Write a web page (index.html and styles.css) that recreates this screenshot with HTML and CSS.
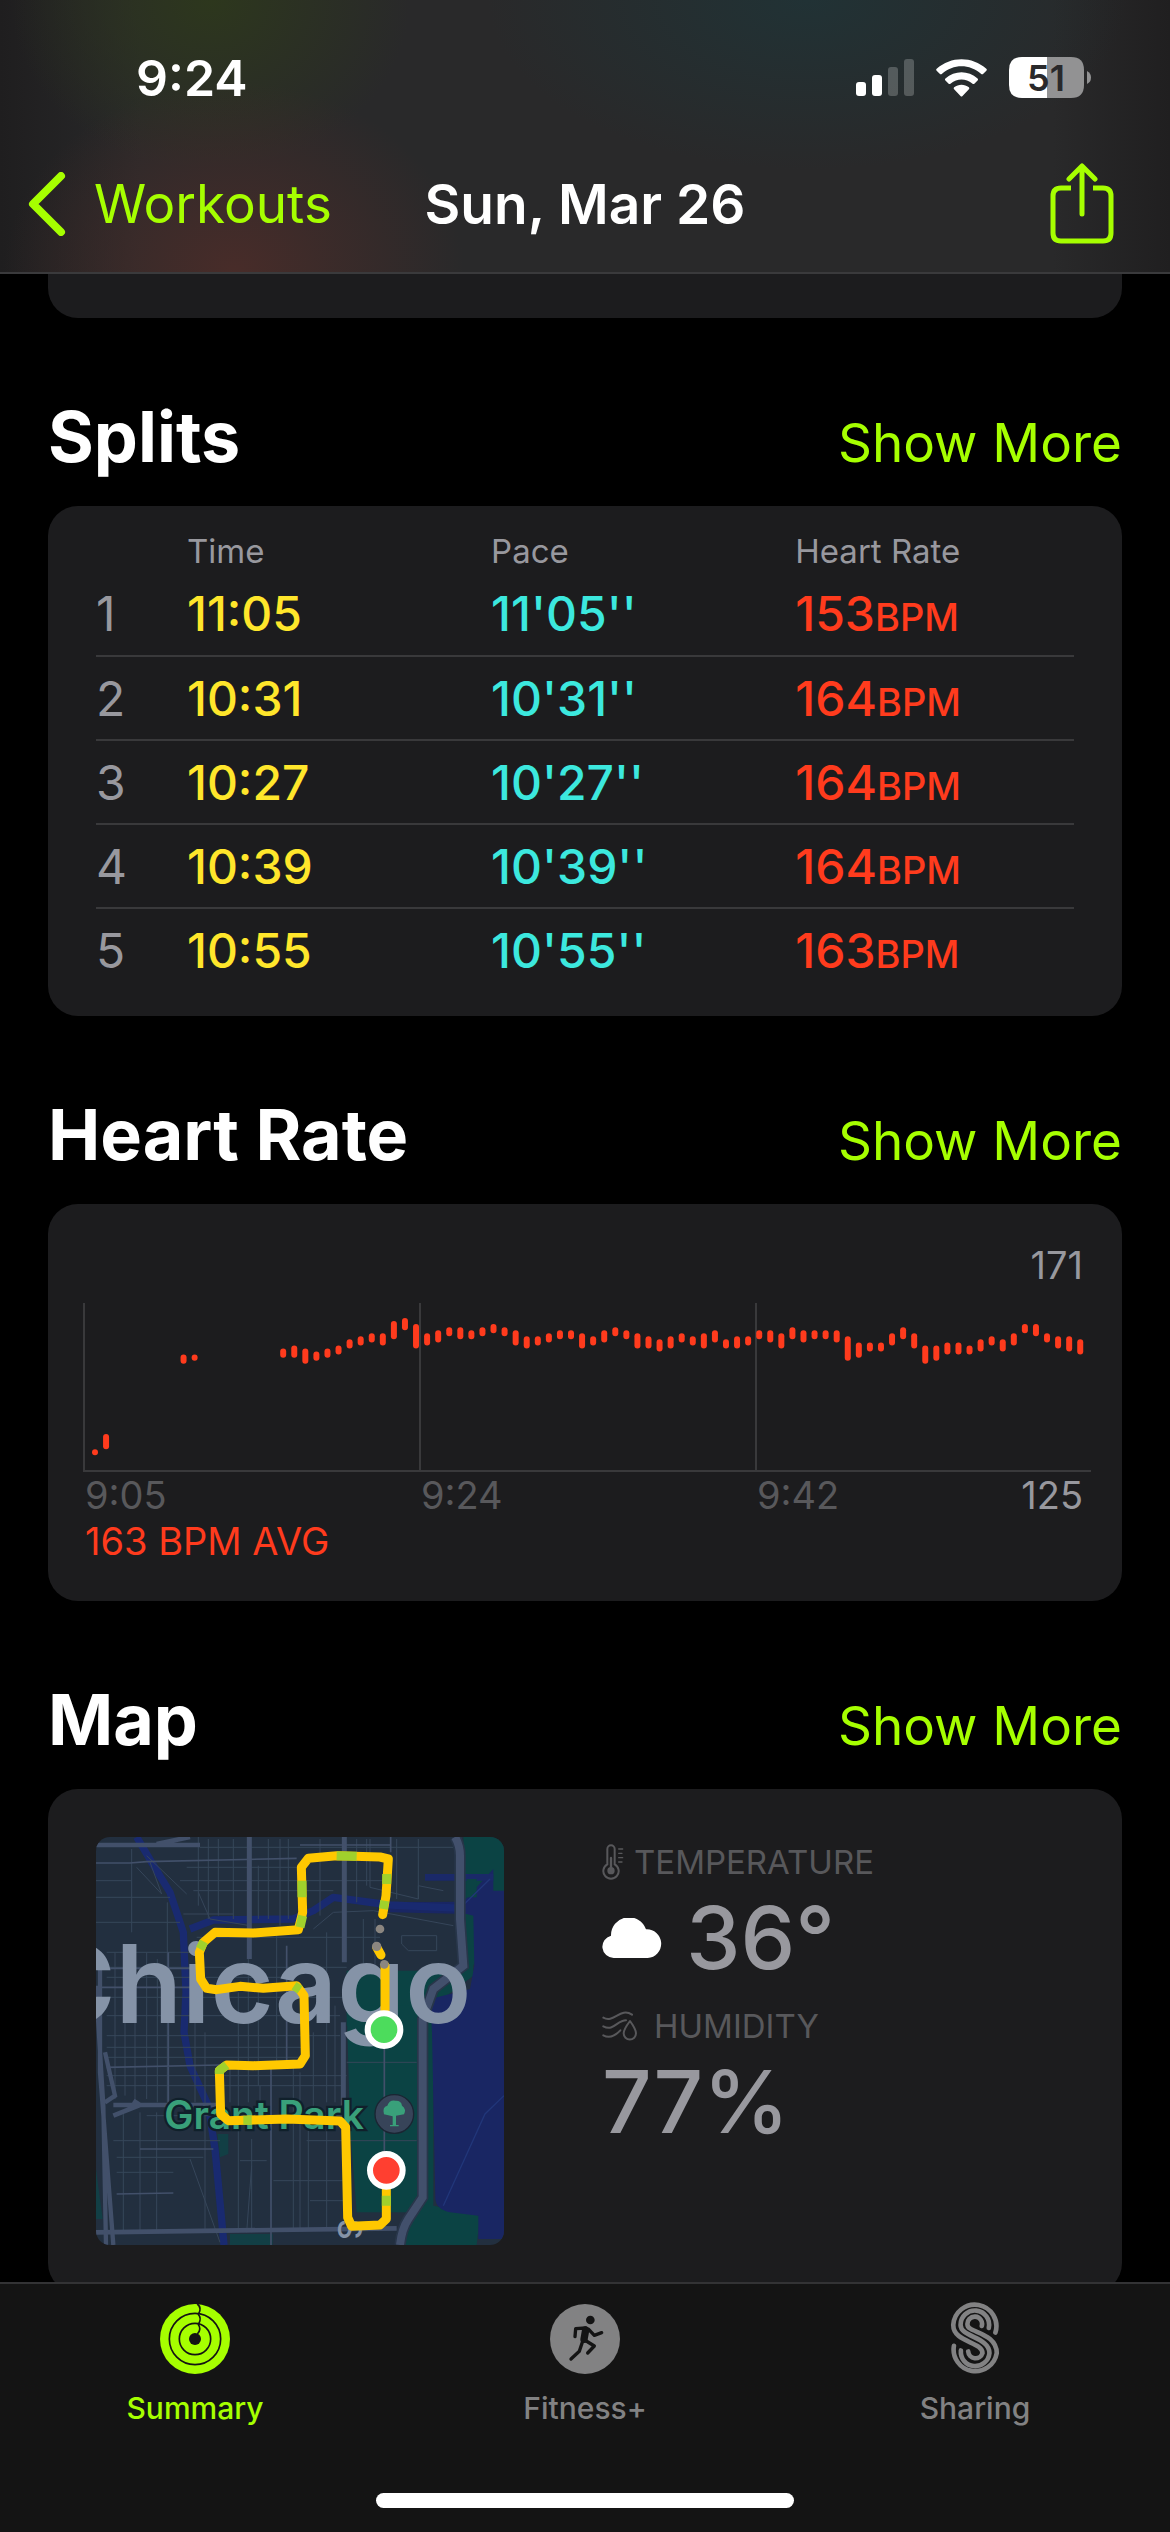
FILE: index.html
```
<!DOCTYPE html>
<html lang="en">
<head>
    <meta charset="UTF-8">
    <meta name="viewport" content="width=device-width, initial-scale=1.0">
    <title>Workout - Sun, Mar 26</title>
    <link rel="stylesheet" href="styles.css">
</head>
<body>
    <header class="top-bar">
        <div class="status-bar">
            <span class="clock">9:24</span>
            <div class="status-icons">
                <svg width="58" height="38" viewBox="0 0 58 38" fill="#fff">
                    <rect x="0" y="23" width="10" height="14" rx="3"/>
                    <rect x="16" y="16" width="10" height="21" rx="3"/>
                    <rect x="32" y="8" width="10" height="29" rx="3" opacity=".22"/>
                    <rect x="48" y="0" width="10" height="37" rx="3" opacity=".22"/>
                </svg>
                <svg width="51" height="38" viewBox="0 0 152 113" fill="#fff">
                    <path d="M2 29C44-9 108-9 150 29Q153 32 150 35L141 44Q138 47 134 44C101 14 51 14 18 44Q14 47 11 44L2 35Q-1 32 2 29Z"/>
                    <path d="M28 58C56 33 96 33 124 58Q127 61 124 64L115 73Q112 76 108 73C89 57 63 57 44 73Q40 76 37 73L28 64Q25 61 28 58Z"/>
                    <path d="M54 84C67 74 85 74 98 84Q101 87 98 90L79 110Q76 113 73 110L54 90Q51 87 54 84Z"/>
                </svg>
                <svg class="battery" width="83" height="41" viewBox="0 0 83 41">
                    <path d="M13 0H38V41H13Q0 41 0 28V13Q0 0 13 0Z" fill="#fff"/>
                    <path d="M38 0H62Q75 0 75 13V28Q75 41 62 41H38Z" fill="#929293"/>
                    <path d="M78 14Q82 16 82 20.500T78 27Z" fill="#929293"/>
                    <text x="37" y="34" text-anchor="middle">51</text>
                </svg>
            </div>
        </div>
        <nav class="nav-bar">
            <a href="#" class="back">
                <svg width="38" height="64" viewBox="0 0 38 64" fill="none" stroke="currentColor" stroke-width="8" stroke-linecap="round" stroke-linejoin="round">
                    <path d="M33 4L5 32L33 60"/>
                </svg>
                Workouts
            </a>
            <h1>Sun, Mar 26</h1>
            <button class="share" aria-label="Share">
                <svg width="64" height="82" viewBox="0 0 64 82" fill="none" stroke="currentColor" stroke-width="5" stroke-linecap="round" stroke-linejoin="round">
                    <path d="M21 25H11Q3 25 3 33V70Q3 78 11 78H53Q61 78 61 70V33Q61 25 53 25H43" stroke-linecap="butt"/>
                    <path d="M32 51V4M19 16L32 3L45 16"/>
                </svg>
            </button>
        </nav>
    </header>

    <main class="content">
        <div class="card card-end"></div>

        <section>
            <div class="section-head">
                <h2>Splits</h2>
                <a href="#">Show More</a>
            </div>
            <div class="card splits">
                <table>
                    <thead>
                        <tr><th class="col-num"></th><th class="col">Time</th><th class="col">Pace</th><th>Heart Rate</th></tr>
                    </thead>
                    <tbody>
                        <tr><td>1</td><td class="time">11:05</td><td class="pace">11'05''</td><td class="bpm">153<small>BPM</small></td></tr>
                        <tr><td>2</td><td class="time">10:31</td><td class="pace">10'31''</td><td class="bpm">164<small>BPM</small></td></tr>
                        <tr><td>3</td><td class="time">10:27</td><td class="pace">10'27''</td><td class="bpm">164<small>BPM</small></td></tr>
                        <tr><td>4</td><td class="time">10:39</td><td class="pace">10'39''</td><td class="bpm">164<small>BPM</small></td></tr>
                        <tr><td>5</td><td class="time">10:55</td><td class="pace">10'55''</td><td class="bpm">163<small>BPM</small></td></tr>
                    </tbody>
                </table>
            </div>
        </section>

        <section>
            <div class="section-head">
                <h2>Heart Rate</h2>
                <a href="#">Show More</a>
            </div>
            <div class="card heart">
                <div class="chart-max">171</div>
                <svg id="hr-chart" viewBox="0 0 1008 169">
                    <path d="M1 0V168M337 0V168M673 0V168" stroke="#39393b" stroke-width="2"/>
                    <path d="M0 168H1008" stroke="#39393b" stroke-width="2"/>
                </svg>
                <div class="chart-axis">
                    <div>9:05</div>
                    <div>9:24</div>
                    <div class="axis-end">9:42 <span class="chart-min">125</span></div>
                </div>
                <div class="chart-avg">163 BPM AVG</div>
            </div>
        </section>

        <section>
            <div class="section-head">
                <h2>Map</h2>
                <a href="#">Show More</a>
            </div>
            <div class="card map-card">
                <svg class="map" viewBox="48 54 1224 1224">
                    <rect x="48" y="54" width="1224" height="1224" fill="#222f3f"/>
                    <!-- lake and parks -->
                    <path d="M1150 54H1272V230L1180 440L1180 470L1060 560L1060 1160L1200 1190L1190 1278H960L1030 1130V620H800V455H1160Z" fill="#0b4344"/>
                    <path d="M800 560H1020V1180H830L810 920Z" fill="#0b4344"/>
                    <path d="M930 250L1150 248L1240 150V215H1272V1260H1195L1195 1190L1110 1180Q1068 1170 1066 1140L1056 640L1050 540L1170 510L1183 440L1180 290L1160 285L930 280Z" fill="#192663"/>
                    <path d="M1035 165H1240V185H1035Z" fill="#1a2968"/>
                    <rect x="1160" y="180" width="30" height="55" fill="#0b4344"/>
                    <path d="M412 945H445V1005L420 1015Z M450 1245H578V1278H450Z M48 1050L68 1200H48Z" fill="#123f45"/>
                    <!-- river -->
                    <g fill="none" stroke="#192a70" stroke-width="22" stroke-linejoin="round">
                        <path d="M170 54L215 130L270 220L310 340L318 520L312 640L330 740L385 860L405 990L432 1278"/>
                        <path d="M330 330L400 303L640 300L700 275L760 235L930 258L1150 268"/>
                    </g>
                    <path d="M1272 830L1215 885L1090 1160M1140 268L1230 180" fill="none" stroke="#213679" stroke-width="4"/>
                    <!-- small streets -->
                    <g fill="none" stroke="#36465a" stroke-width="3">
                        <path d="M360 85H1120M320 145H650M300 185H930M340 215H760M310 285H460M350 355H900M48 235H270M48 310H300M80 400H340M80 445H800M80 475H620M80 535H800M80 590H780M80 650H780M80 685H680M80 715H660M80 770H800M80 800H790M200 890H800M110 1015H370M480 1025H560M680 965H1010M580 1085H800M690 1145H800M110 1060H280M100 965H420M800 730H1010"/>
                        <path d="M105 400V840M135 400V830M165 400V850M200 400V840M232 420V850M262 250V850M385 60V300M415 60V290M355 54V260M460 60V300M535 140V300M565 60V300M600 60V320M625 60V300M345 500V850M375 640V1240M450 740V850M475 520V1240M505 380V850M535 500V800M590 330V740M640 740V1230M660 760V1230M700 640V900M740 340V850M765 560V850M685 900V1230M740 900V1230M720 60V290M830 60V250M860 60V200M885 300V440M950 60V240M1015 60V240M850 300V450M130 880V1240M180 880V1240M230 880V1240M515 960V1240M540 800V900"/>
                        <path d="M170 145L245 225L210 130M200 110L320 225M155 90V340M48 185H155M700 330L760 280L880 275L1120 320M965 350H1070V395H985L965 375ZM870 60V205L1015 240V200L1090 215M355 220L390 300L510 320M330 1020L420 1270M515 1040L500 1240"/>
                    </g>
                    <!-- main streets -->
                    <g fill="none" stroke="#42506a" stroke-width="9">
                        <path d="M48 132H150L200 128L650 118M80 745L420 738M180 990H400M110 1125L280 1122M80 448H340M620 380V740M265 400V870M573 740V1278M932 54V100M660 78H932M913 660V1000M48 505H340" stroke-width="5"/>
                        <path d="M508 54V420M793 54V430M790 610V900" stroke-width="15"/>
                        <path d="M48 78L360 78M230 75L330 54M100 858H420M160 845L180 858L100 890" stroke-width="14"/>
                        <path d="M48 1240L950 1228" stroke-width="14"/>
                        <path d="M60 440V760L68 860L100 1278M48 500L70 860L78 1278M75 700L105 830L75 850" stroke-width="13"/>
                    </g>
                    <path d="M1125 54Q1140 80 1140 110V300L1150 440L1060 510L1028 600V1135L985 1200Q965 1230 960 1278" fill="none" stroke="#28364a" stroke-width="34"/>
                    <path d="M1125 54Q1140 80 1140 110V300L1150 440L1060 510L1028 600V1135L985 1200Q965 1230 960 1278" fill="none" stroke="#42506c" stroke-width="24"/>
                    <text class="map-city" x="1174" y="613" text-anchor="end">Chicago</text>
                    <text class="map-park" x="253" y="930">Grant Park</text>
                    <text class="map-street" transform="translate(774 1200) rotate(90)">S</text>
                    <circle cx="943" cy="885" r="58" fill="#374459" stroke="#1b2533" stroke-width="4"/>
                    <path d="M938 918V892L912 886Q906 864 922 860Q928 842 946 845Q964 844 966 860Q980 870 972 886L948 890V918H956V922H930V918Z" fill="#39a07a"/>
                    <!-- route -->
                    <g fill="none" stroke="#ffc800" stroke-width="27" stroke-linecap="round" stroke-linejoin="round">
                        <path d="M908 287L918 230L925 120L900 114L770 110L685 118L664 145L668 280L655 332L520 342L405 340L370 370L358 400L362 480L380 508L410 512L480 502L550 508L650 500L672 530L676 710L660 735L520 740L440 738L418 755L422 885L445 905L620 900L780 906L797 925L803 1195L815 1222L900 1218L919 1200V1110"/>
                        <path d="M890 385L903 408M915 440V580"/>
                        <path d="M770 110L830 112M666 185V235M668 290L660 325M372 368L360 390M642 500L660 512M440 738L418 755V765M920 165V195M914 245L910 270M490 904H515M919 1130V1160" stroke="#a0d02c" stroke-linecap="butt"/>
                    </g>
                    <g fill="#8b8680">
                        <circle cx="900" cy="330" r="13"/>
                        <circle cx="890" cy="382" r="14"/>
                        <circle cx="913" cy="436" r="13"/>
                    </g>
                    <circle cx="912" cy="632" r="49" fill="#4cdc5c" stroke="#fff" stroke-width="18"/>
                    <circle cx="919" cy="1054" r="49" fill="#ff3f30" stroke="#fff" stroke-width="18"/>
                </svg>
                <div class="weather">
                    <div class="label">
                        <svg width="22" height="36" viewBox="0 0 66 108" fill="none" stroke="currentColor" stroke-width="6" stroke-linecap="round">
                            <path d="M16 15A10 10 0 0 1 38 15V61A23 23 0 1 1 16 61Z"/>
                            <path d="M27 42V75" stroke-width="7"/>
                            <circle cx="27" cy="80" r="8" fill="currentColor"/>
                            <path d="M50 15H62M50 28H60M50 41H62M50 54H60" stroke-width="4"/>
                        </svg>
                        TEMPERATURE
                    </div>
                    <div class="value">
                        <svg width="60" height="40" viewBox="0 0 180 120" fill="#fff">
                            <path d="M35 120A34 34 0 0 1 27 53A54 54 0 0 1 132 34A43 43 0 1 1 137 120Z"/>
                        </svg>
                        36°
                    </div>
                    <div class="label humidity">
                        <svg width="36" height="30" viewBox="0 0 108 90" fill="none" stroke="currentColor" stroke-width="6" stroke-linecap="round" stroke-linejoin="round">
                            <path d="M4 20C35 38 55-12 90 11M4 46C35 62 45 28 72 28M4 73C25 84 42 72 55 58"/>
                            <path d="M84 30Q65 55 65 67A18 18 0 0 0 102 67Q102 55 84 30Z"/>
                        </svg>
                        HUMIDITY
                    </div>
                    <div class="value">77%</div>
                </div>
            </div>
        </section>
    </main>

    <footer class="tab-bar">
        <nav class="tabs">
            <a href="#" class="tab active">
                <svg width="70" height="78" viewBox="0 0 210 210">
                    <circle cx="105" cy="105" r="105" fill="currentColor"/>
                    <circle cx="105" cy="105" r="18" fill="#141414"/>
                    <g fill="none" stroke="#141414" stroke-width="5">
                        <circle cx="105" cy="105" r="77"/>
                        <circle cx="105" cy="105" r="47"/>
                        <path d="M112 0Q126 12 116 29M114 30Q126 42 116 60M114 60Q126 76 112 90"/>
                    </g>
                </svg>
                Summary
            </a>
            <a href="#" class="tab">
                <svg width="70" height="78" viewBox="0 0 210 210">
                    <circle cx="105" cy="105" r="105" fill="currentColor"/>
                    <circle cx="121" cy="48" r="13" fill="#141414"/>
                    <g fill="none" stroke="#141414" stroke-width="10" stroke-linecap="round" stroke-linejoin="round">
                        <path d="M108 72L77 74L75 98M116 76L133 94L155 86M98 112L88 142L63 165M104 108L133 126L113 147"/>
                        <path d="M107 78L102 106" stroke-width="22"/>
                    </g>
                </svg>
                Fitness+
            </a>
            <a href="#" class="tab">
                <svg width="50" height="78" viewBox="-1 0 149 235" fill="none" stroke="currentColor" stroke-width="14" stroke-linecap="round">
                    <path d="M135 98A65 65 0 1 0 8 75C8 128 96 125 96 160A22 22 0 0 1 53 155"/>
                    <path d="M115 84A43 43 0 1 0 30 75C30 112 117 112 117 160A43 43 0 0 1 31 152"/>
                    <path d="M94 78A22 22 0 1 0 51 75C51 98 139 98 139 160A65 65 0 0 1 10 138"/>
                </svg>
                Sharing
            </a>
        </nav>
        <div class="home-indicator"></div>
    </footer>

    <script>
        // [slot, top, length] of each heart rate bar
        const bars = [
            [0, 43, 2], [1, 38, 5], [8, 12, 3], [9, 12, 2],
            [17, 10, 3], [18, 9, 4], [19, 10, 5], [20, 11, 3], [21, 10, 3], [22, 9, 3],
            [23, 7, 3], [24, 6, 3], [25, 5, 3], [26, 5, 4], [27, 1, 6], [28, 0, 4],
            [29, 2, 8], [30, 5, 4], [31, 4, 4], [32, 3, 3], [33, 3, 4], [34, 4, 3],
            [35, 3, 3], [36, 2, 3], [37, 3, 3], [38, 4, 5], [39, 6, 4], [40, 6, 3],
            [41, 5, 3], [42, 4, 3], [43, 4, 3], [44, 5, 5], [45, 6, 3], [46, 4, 4],
            [47, 3, 3], [48, 4, 3], [49, 5, 5], [50, 6, 4], [51, 7, 4], [52, 6, 4],
            [53, 5, 3], [54, 6, 3], [55, 5, 5], [56, 4, 4], [57, 7, 3], [58, 6, 4],
            [59, 6, 3], [60, 4, 3], [61, 4, 4], [62, 5, 5], [63, 3, 4], [64, 4, 4],
            [65, 4, 3], [66, 4, 3], [67, 4, 4], [68, 6, 8], [69, 8, 5], [70, 8, 3],
            [71, 8, 3], [72, 5, 4], [73, 3, 4], [74, 5, 5], [75, 9, 6], [76, 9, 5],
            [77, 8, 4], [78, 8, 4], [79, 9, 3], [80, 7, 4], [81, 6, 3], [82, 7, 4],
            [83, 5, 4], [84, 2, 3], [85, 2, 4], [86, 5, 3], [87, 6, 4], [88, 6, 5],
            [89, 7, 5]
        ];
        const chart = document.getElementById('hr-chart');
        const unit = 3.05;

        bars.forEach(([slot, top, length]) => {
            const rect = document.createElementNS('http://www.w3.org/2000/svg', 'rect');
            rect.setAttribute('x', 9 + slot * 11.07);
            rect.setAttribute('y', 15 + top * unit);
            rect.setAttribute('width', 6);
            rect.setAttribute('height', length * unit);
            rect.setAttribute('rx', 3);
            rect.setAttribute('class', 'hr-bar');
            chart.appendChild(rect);
        });
    </script>
</body>
</html>
```
FILE: styles.css
```
* {
    box-sizing: border-box;
}
body {
    margin: 0;
    min-height: 100vh;
    display: flex;
    flex-direction: column;
    background-color: #000;
    color: #fff;
    font-family: Inter, "Liberation Sans", sans-serif;
}
svg {
    display: block;
    flex-shrink: 0;
}
a {
    color: #a6ff00;
    text-decoration: none;
}
h1, h2 {
    margin: 0;
}

/* Header */
.top-bar {
    position: sticky;
    top: 0;
    z-index: 1;
    border-bottom: 2px solid #3a3a3c;
    background:
        radial-gradient(ellipse 230px 190px at 20% 100%, #482c29, transparent),
        radial-gradient(ellipse 200px 170px at 18% 0, #2d371d, transparent),
        radial-gradient(ellipse 320px 170px at 69% 0, #213235, transparent),
        linear-gradient(90deg, #1f1e1f, #29292a 12%, #29292a 90%, #201f20);
}
.status-bar {
    display: flex;
    justify-content: space-between;
    align-items: center;
    height: 136px;
    padding: 19px 78px 0 136px;
}
.clock {
    font-size: 50px;
    font-weight: 600;
}
.status-icons {
    display: flex;
    align-items: center;
    gap: 22px;
}
.battery text {
    font-size: 36px;
    font-weight: 600;
    fill: #29292b;
}
.nav-bar {
    display: grid;
    grid-template-columns: 1fr auto 1fr;
    align-items: center;
    height: 136px;
    padding: 0 28px;
}
.back {
    display: flex;
    align-items: center;
    gap: 28px;
    font-size: 53px;
}
h1 {
    font-size: 55px;
    font-weight: 600;
}
.share {
    justify-self: end;
    margin-right: 28px;
    padding: 0;
    border: none;
    background: none;
    color: #a6ff00;
}

/* Sections */
.content {
    flex: 1;
    padding: 0 48px;
}
.card {
    background-color: #1c1c1e;
    border-radius: 30px;
}
.card-end {
    height: 44px;
    border-radius: 0 0 30px 30px;
}
.section-head {
    display: flex;
    justify-content: space-between;
    align-items: baseline;
    height: 188px;
    padding-top: 76px;
    line-height: 86px;
}
.section-head h2 {
    font-size: 70px;
    font-weight: 700;
}
.section-head a {
    font-size: 53px;
}

/* Splits */
.splits {
    padding: 24px 48px;
}
table {
    width: 100%;
    table-layout: fixed;
    border-collapse: collapse;
}
th, td {
    padding: 0;
    text-align: left;
}
th {
    height: 42px;
    font-size: 33px;
    font-weight: 400;
    color: #98989e;
}
.col-num {
    width: 9.3%;
}
.col {
    width: 31.1%;
}
td {
    height: 84px;
    font-size: 48px;
    color: #98989e;
    border-bottom: 2px solid #39393b;
}
tr:last-child td {
    border-bottom: none;
}
.time, .pace, .bpm {
    font-weight: 500;
}
.time {
    color: #ffe62b;
}
.pace {
    color: #3ce8de;
}
.bpm {
    color: #ff3b1d;
}
.bpm small {
    font-size: 38px;
}

/* Heart rate */
.heart {
    padding: 38px 31px 37px 35px;
    font-size: 38px;
    line-height: 46px;
    color: #98989e;
}
.chart-max {
    padding-right: 8px;
    margin-bottom: 15px;
    text-align: right;
}
#hr-chart {
    width: 100%;
    height: auto;
}
.hr-bar {
    fill: #ff3b1d;
}
.chart-axis {
    display: grid;
    grid-template-columns: 1fr 1fr 1fr;
    color: #58585b;
}
.chart-axis div {
    padding-left: 2px;
}
.axis-end {
    display: flex;
    justify-content: space-between;
    padding-right: 8px;
}
.chart-min {
    color: #98989e;
}
.chart-avg {
    padding-left: 2px;
    color: #ff3b1d;
}

/* Map */
.map-card {
    display: flex;
    gap: 98px;
    padding: 48px;
}
.map {
    width: 408px;
    height: 408px;
    border-radius: 14px;
}
.map-city {
    font-size: 326px;
    font-weight: 600;
    fill: #8593a7;
}
.map-park {
    font-size: 117px;
    font-weight: 600;
    fill: #39a07a;
    stroke: #10202b;
    stroke-width: 14px;
    paint-order: stroke;
}
.map-street {
    font-size: 96px;
    font-weight: 500;
    fill: #8593a7;
}
.weather {
    padding-top: 5px;
}
.label {
    display: flex;
    align-items: center;
    gap: 10px;
    font-size: 33px;
    line-height: 40px;
    color: #58585b;
}
.humidity {
    gap: 16px;
    margin-top: 18px;
}
.value {
    display: flex;
    align-items: center;
    gap: 24px;
    margin-top: 6px;
    font-size: 87px;
    font-weight: 500;
    line-height: 100px;
    color: #98989e;
}

/* Tab bar */
.tab-bar {
    position: sticky;
    bottom: 0;
    margin-top: -12px;
    padding: 16px 0 24px;
    border-top: 2px solid #333335;
    background-color: #141414;
}
.tabs {
    display: flex;
    margin-bottom: 67px;
}
.tab {
    flex: 1;
    display: flex;
    flex-direction: column;
    align-items: center;
    justify-content: space-between;
    height: 126px;
    font-size: 30px;
    font-weight: 500;
    line-height: 36px;
    color: #828283;
}
.active {
    color: #a6ff00;
}
.home-indicator {
    width: 418px;
    height: 15px;
    margin: 0 auto;
    border-radius: 8px;
    background-color: #fff;
}
```
